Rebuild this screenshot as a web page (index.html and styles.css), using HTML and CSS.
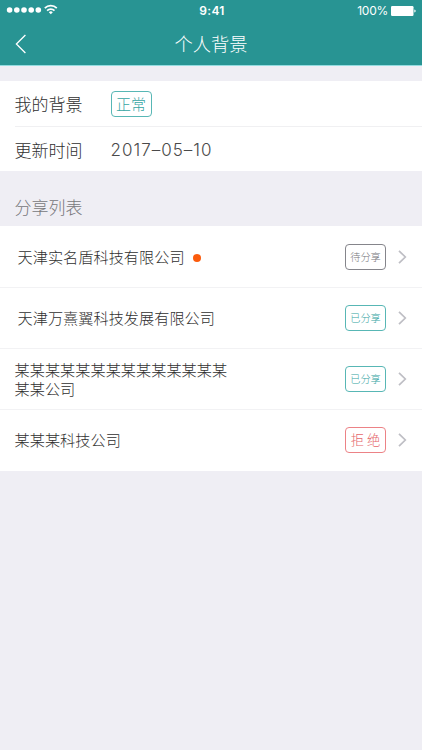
FILE: index.html
```html
<!DOCTYPE html>
<html lang="zh-CN">
<head>
<meta charset="utf-8">
<title>个人背景</title>
<link rel="stylesheet" href="styles.css">
</head>
<body>
<header class="header">
  <div class="status">
    <div class="signal">
      <svg width="52" height="12" viewBox="0 0 52 12" fill="#fff">
        <circle cx="3.6" cy="6" r="2.8"/><circle cx="10.8" cy="6" r="2.8"/><circle cx="18" cy="6" r="2.8"/><circle cx="25.2" cy="6" r="2.8"/><circle cx="32.3" cy="6" r="2.8"/>
        <g fill="none" stroke="#fff" stroke-width="1.7"><path d="M38.8 4.2a8.5 8.5 0 0 1 12 0M41.1 6.6a5.2 5.2 0 0 1 7.4 0"/></g>
        <path d="M42.8 8.2a2.9 2.9 0 0 1 4 0l-2 2.1z"/>
      </svg>
    </div>
    <div class="clock">9:41</div>
    <div class="power"><span>100%</span>
      <svg width="25" height="10" viewBox="0 0 25 10" fill="#fff"><rect x="0" y="0" width="22.5" height="10" rx="1.2"/><path d="M23.3 3.4q1.4.3 1.4 1.6t-1.4 1.6z"/></svg>
    </div>
  </div>
  <nav class="nav">
    <svg class="back" width="12" height="20" viewBox="0 0 12 20" fill="none" stroke="#fff" stroke-width="1.3"><path d="M10.4 1L1.4 10l9 9"/></svg>
    <h1 class="title">个人背景</h1>
  </nav>
</header>
<section class="info">
  <div class="field"><span class="label">我的背景</span><span class="state">正常</span></div>
  <div class="field"><span class="label">更新时间</span><span class="date">2017–05–10</span></div>
</section>
<h2 class="heading">分享列表</h2>
<ul class="list">
  <li class="row"><span class="name indent">天津实名盾科技有限公司</span><i class="dot"></i><span class="tag gray">待分享</span><svg class="arrow" viewBox="0 0 9 14"><path d="M1 .8L7.3 7 1 13.2"/></svg></li>
  <li class="row"><span class="name indent">天津万熹翼科技发展有限公司</span><span class="tag">已分享</span><svg class="arrow" viewBox="0 0 9 14"><path d="M1 .8L7.3 7 1 13.2"/></svg></li>
  <li class="row"><span class="name">某某某某某某某某某某某某某某<br>某某公司</span><span class="tag">已分享</span><svg class="arrow" viewBox="0 0 9 14"><path d="M1 .8L7.3 7 1 13.2"/></svg></li>
  <li class="row"><span class="name">某某某科技公司</span><span class="tag red">拒 绝</span><svg class="arrow" viewBox="0 0 9 14"><path d="M1 .8L7.3 7 1 13.2"/></svg></li>
</ul>
</body>
</html>
```

FILE: styles.css
```css
* { box-sizing: border-box; margin: 0; padding: 0; }
body {
  background: #efeef4;
  color: #303030;
  font-family: "Noto Sans CJK SC", sans-serif;
  font-weight: 300;
  min-height: 750px;
}
svg { display: block; flex: none; }
.header {
  height: 66px;
  background: #289493;
  border-bottom: 1px solid #93dce0;
  color: #fff;
}
.status {
  height: 20px;
  display: grid;
  grid-template-columns: 1fr auto 1fr;
  align-items: center;
  padding: 0 6px;
  font: 500 12px/20px Inter, sans-serif;
}
.signal { padding-bottom: 1px; }
.clock { font-weight: 600; letter-spacing: .3px; padding: 1px 0 0 2px; }
.power {
  display: flex;
  justify-content: flex-end;
  align-items: center;
  gap: 3px;
  font-weight: 400;
  letter-spacing: -.25px;
}
.nav {
  height: 45px;
  display: grid;
  grid-template-columns: 60px 1fr 60px;
  align-items: center;
}
.back { margin: 2px 0 0 15px; }
.title { font-size: 18.3px; font-weight: 300; text-align: center; line-height: 46px; }
.info {
  margin-top: 15px;
  height: 90px;
  background: #fff;
  padding-left: 15px;
}
.field { height: 45px; display: flex; align-items: center; }
.field + .field { height: 46px; border-top: 1px solid #f0f0f2; }
.label { width: 96px; font-size: 17px; line-height: 24px; margin-left: -.5px; }
.state {
  width: 41px;
  height: 26px;
  border: 1px solid #58b7b5;
  border-radius: 4px;
  color: #36a5a3;
  font-size: 15px;
  line-height: 23px;
  text-align: center;
}
.date { font: 300 17px/24px Inter, sans-serif; letter-spacing: 1px; color: #4a4a4a; }
.heading {
  height: 55px;
  padding: 12px 0 0 14.5px;
  font-size: 17px;
  line-height: 48px;
  font-weight: 300;
  color: #77777b;
}
.list { list-style: none; background: #fff; height: 245px; }
.row {
  height: 61px;
  display: flex;
  align-items: center;
  padding: 0 15px;
}
.row + .row { border-top: 1px solid #f2f2f4; }
.name { font-size: 15.2px; line-height: 19px; white-space: nowrap; padding-bottom: 1px; margin-left: -.5px; }
.indent { padding-left: 3px; }
.dot {
  width: 8px;
  height: 8px;
  border-radius: 50%;
  background: #fb5b0c;
  margin: 3px 0 0 8px;
}
.tag {
  width: 41px;
  height: 26px;
  margin-left: auto;
  border: 1px solid #58b7b5;
  border-radius: 4px;
  color: #36a5a3;
  font-size: 10.2px;
  line-height: 24px;
  text-align: center;
}
.gray { border-color: #85858b; color: #75757b; }
.red { border-color: #ec8286; color: #e5666b; font-size: 13.3px; }
.arrow {
  width: 9px;
  height: 14px;
  margin-left: 12px;
  fill: none;
  stroke: #bebec4;
  stroke-width: 1.7;
}
```
